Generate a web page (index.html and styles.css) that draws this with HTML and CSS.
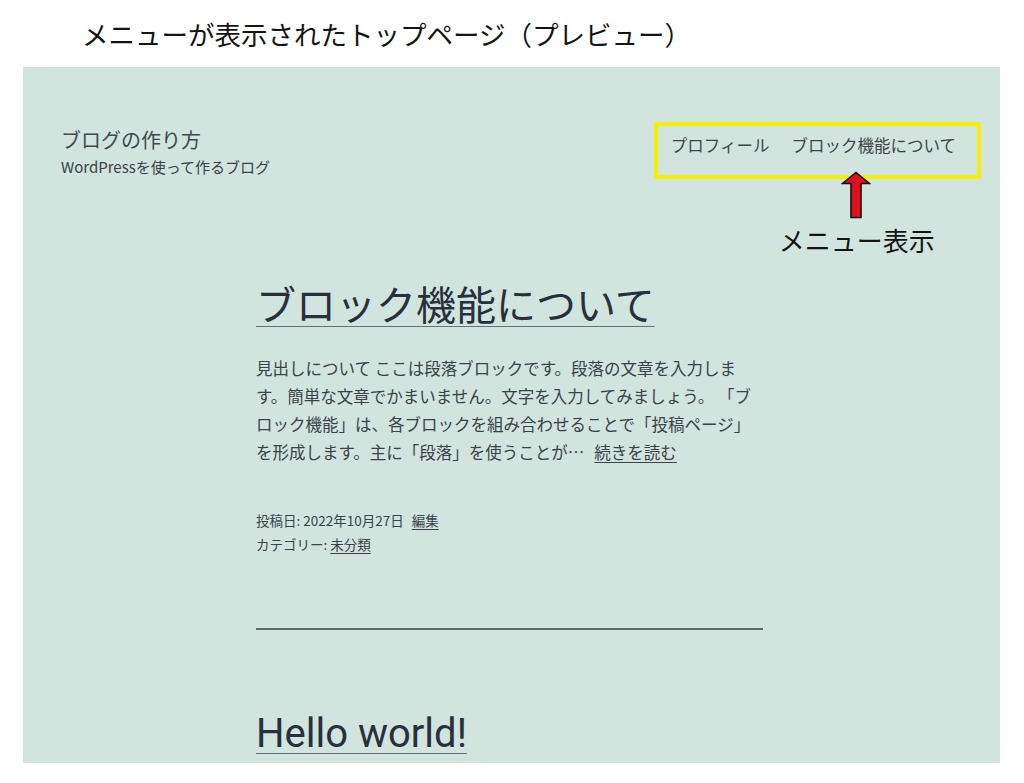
FILE: index.html
```html
<!DOCTYPE html>
<html lang="ja">
<head>
    <meta charset="UTF-8">
    <meta name="viewport" content="width=device-width, initial-scale=1.0">
    <title>メニューが表示されたトップページ（プレビュー）</title>
    <link rel="stylesheet" href="styles.css">
</head>
<body>
    <p class="caption">メニューが表示されたトップページ（プレビュー）</p>

    <!-- プレビュー画面 -->
    <div class="preview">
        <header class="site-header">
            <div class="branding">
                <p class="site-title">ブログの作り方</p>
                <p class="site-desc">WordPressを使って作るブログ</p>
            </div>

            <nav class="menu">
                <a href="#">プロフィール</a>
                <a href="#">ブロック機能について</a>

                <!-- 注釈（矢印＋ラベル） -->
                <div class="note">
                    <svg class="arrow" width="30" height="48" viewBox="0 0 30 48">
                        <polygon points="15,1.5 28.5,12.5 20,12.5 20,46.5 10,46.5 10,12.5 1.5,12.5" fill="#e0101c" stroke="#111" stroke-width="1.6" stroke-linejoin="miter"/>
                    </svg>
                    <p class="note-label">メニュー表示</p>
                </div>
            </nav>
        </header>

        <main class="content">
            <article class="entry">
                <h2 class="entry-title"><a href="#">ブロック機能について</a></h2>
                <p class="excerpt"><span>見出しについて ここは段落ブロックです。段落の文章を入力します。簡単な文章でかまいません。文字を入力してみましょう。 「ブロック機能」は、各ブロックを組み合わせることで「投稿ページ」を形成します。主に「段落」を使うことが…</span><a href="#" class="more">続きを読む</a></p>
                <footer class="entry-meta">
                    <div>投稿日: 2022年10月27日 <a href="#" class="edit">編集</a></div>
                    <div>カテゴリー: <a href="#">未分類</a></div>
                </footer>
            </article>

            <hr class="separator">

            <article class="entry">
                <h2 class="entry-title"><a href="#">Hello world!</a></h2>
            </article>
        </main>
    </div>
</body>
</html>
```

FILE: styles.css
```css
/* 全体 */
body {
    font-family: "Noto Sans CJK JP", sans-serif;
    background-color: #fff;
    color: #3b424b;
    margin: 0;
    padding: 0;
    overflow: hidden;
}

p {
    margin: 0;
}

a {
    color: inherit;
}

/* 上の見出し（注釈） */
.caption {
    padding: 16px 0 0 82px;
    font-size: 26.5px;
    line-height: 36px;
    color: #141414;
}

/* プレビュー画面 */
.preview {
    margin: 15px 0 0 23px;
    width: 977px;
    height: 696px;
    background-color: #d1e4dd;
    overflow: hidden;
}

/* ヘッダー */
.site-header {
    display: flex;
    justify-content: space-between;
    align-items: flex-start;
    padding: 55px 19px 0 38px;
}

.branding {
    margin-top: 4px;
}

.site-title {
    font-size: 20px;
    line-height: 28px;
    color: #424951;
}

.site-desc {
    margin-top: 2px;
    font-size: 15px;
    line-height: 22px;
    color: #3a4149;
}

/* メニュー（黄色の枠で強調） */
.menu {
    position: relative;
    display: flex;
    gap: 22px;
    padding: 7px 21px 18px 13px;
    border: 4px solid #f8ef08;
    font-size: 16.5px;
    line-height: 24px;
}

.menu a {
    text-decoration: none;
    color: #3d444c;
}

/* 注釈 */
.note {
    position: absolute;
    left: 121px;
    top: 45px;
    white-space: nowrap;
}

.arrow {
    display: block;
    margin-left: 62px;
}

.note-label {
    margin-top: 3px;
    font-size: 26px;
    line-height: 36px;
    color: #141414;
}

/* 本文 */
.content {
    width: 507px;
    margin: 104px 0 0 233px;
}

.entry-title {
    margin: 0;
    font-family: Roboto, "Noto Sans CJK JP", sans-serif;
    font-size: 40px;
    line-height: 48px;
    font-weight: 400;
    color: #28303d;
}

.entry-title a {
    text-decoration-thickness: 1px;
    text-underline-offset: 6px;
    text-decoration-color: #6a7279;
}

.excerpt {
    margin-top: 23px;
    font-size: 16.5px;
    line-height: 28px;
}

.excerpt .more {
    margin-left: 10px;
    text-underline-offset: 3px;
}

.entry-meta {
    margin-top: 42px;
    font-size: 13.5px;
    line-height: 24px;
}

.entry-meta a {
    text-underline-offset: 3px;
}

.entry-meta .edit {
    margin-left: 5px;
}

.separator {
    margin: 72px 0 0;
    border: none;
    border-top: 2px solid #5f676d;
}

.separator + .entry {
    margin-top: 80px;
}
```
